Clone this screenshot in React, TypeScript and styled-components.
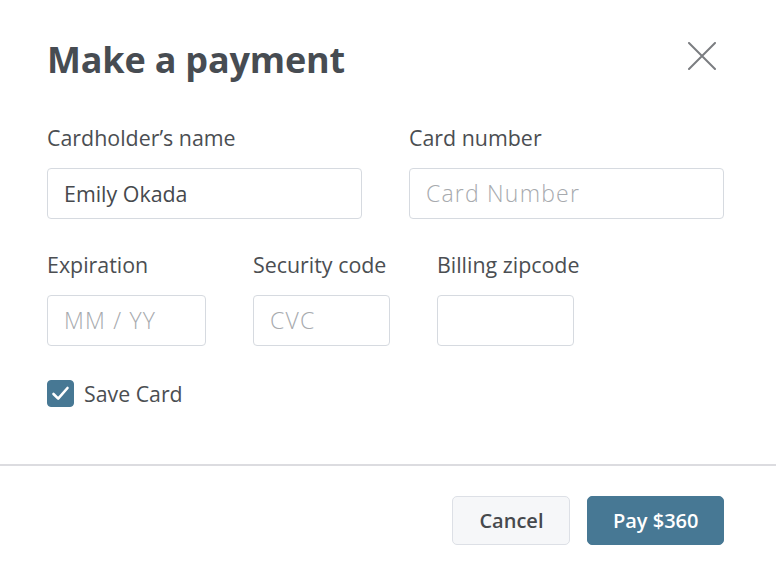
import React, { useState } from 'react';
import { createGlobalStyle, styled } from 'styled-components';

const GlobalStyle = createGlobalStyle`
  html, body {
    margin: 0;
    padding: 0;
    background: #ffffff;
  }
  body {
    font-family: 'Open Sans', 'Noto Sans', sans-serif;
    color: #4a4d52;
  }
`;

const CloseIcon = (): JSX.Element => (
  <svg width="30" height="28" viewBox="0 0 30 28" fill="none">
    <path d="M2 1 L28 27 M28 1 L2 27" stroke="#7b7d81" strokeWidth="2" strokeLinecap="round" />
  </svg>
);

const CheckIcon = (): JSX.Element => (
  <svg width="21" height="21" viewBox="0 0 21 21" fill="none">
    <path d="M3.5 11 L8.2 15.6 L17.5 5" stroke="#ffffff" strokeWidth="2.6" strokeLinecap="round" strokeLinejoin="round" />
  </svg>
);

type FieldProps = {
  label: string;
  placeholder?: string;
  defaultValue?: string;
  width: number;
};

const Field = ({ label, placeholder, defaultValue, width }: FieldProps): JSX.Element => (
  <FieldWrapper $width={width}>
    <Label>{label}</Label>
    <Input placeholder={placeholder} defaultValue={defaultValue} />
  </FieldWrapper>
);

export default function App(): JSX.Element {
  const [saveCard, setSaveCard] = useState(true);

  return (
    <>
      <GlobalStyle />
      <Modal>
        <Header>
          <Title>Make a payment</Title>
          <CloseButton aria-label="Close">
            <CloseIcon />
          </CloseButton>
        </Header>

        <Body>
          <Row>
            <Field label="Cardholder’s name" defaultValue="Emily Okada" width={316} />
            <Field label="Card number" placeholder="Card Number" width={316} />
          </Row>

          <Row>
            <Field label="Expiration" placeholder="MM / YY" width={159} />
            <Field label="Security code" placeholder="CVC" width={137} />
            <Field label="Billing zipcode" width={137} />
          </Row>

          <CheckRow onClick={() => setSaveCard(!saveCard)}>
            <CheckBox $checked={saveCard}>{saveCard && <CheckIcon />}</CheckBox>
            <CheckLabel>Save Card</CheckLabel>
          </CheckRow>
        </Body>

        <Footer>
          <Button $primary={false}>Cancel</Button>
          <Button $primary>Pay $360</Button>
        </Footer>
      </Modal>
    </>
  );
}

const Modal = styled.div`
  width: 776px;
  height: 578px;
  display: flex;
  flex-direction: column;
  background: #ffffff;
`;

const Header = styled.div`
  display: flex;
  align-items: flex-start;
  justify-content: space-between;
  padding: 36px 59px 0 47px;
`;

const Title = styled.h1`
  margin: 0;
  font-size: 36px;
  line-height: 48px;
  font-weight: 700;
  color: #474c52;
  letter-spacing: -0.2px;
`;

const CloseButton = styled.button`
  margin-top: 6px;
  padding: 0;
  border: none;
  background: transparent;
  cursor: pointer;
  display: grid;
  place-items: center;
`;

const Body = styled.div`
  flex: 1;
  display: flex;
  flex-direction: column;
  gap: 32px;
  padding: 40px 52px 0 47px;
`;

const Row = styled.div`
  display: flex;
  gap: 47px;
`;

const FieldWrapper = styled.div<{ $width: number }>`
  width: ${({ $width }) => $width}px;
  display: flex;
  flex-direction: column;
  gap: 16px;
`;

const Label = styled.label`
  font-size: 21.4px;
  line-height: 28px;
  white-space: nowrap;
  color: #4b4e52;
`;

const Input = styled.input`
  box-sizing: border-box;
  width: 100%;
  height: 51px;
  padding: 0 16px;
  border: 1px solid #d6dae0;
  border-radius: 4px;
  font-family: 'Open Sans', 'Noto Sans', sans-serif;
  font-size: 21.4px;
  color: #46494d;
  outline: none;

  &::placeholder {
    color: #a7aaae;
    font-size: 23px;
    font-weight: 300;
    letter-spacing: 1.2px;
  }
`;

const CheckRow = styled.div`
  display: flex;
  align-items: center;
  gap: 10px;
  height: 28px;
  margin-top: 1px;
  cursor: pointer;
`;

const CheckBox = styled.div<{ $checked: boolean }>`
  box-sizing: border-box;
  width: 27px;
  height: 27px;
  border-radius: 4px;
  background: ${({ $checked }) => ($checked ? '#477894' : '#ffffff')};
  border: 1px solid ${({ $checked }) => ($checked ? '#477894' : '#c9ced6')};
  display: grid;
  place-items: center;
`;

const CheckLabel = styled.span`
  font-size: 21.3px;
  color: #4b4e52;
`;

const Footer = styled.div`
  box-sizing: border-box;
  height: 114px;
  flex-shrink: 0;
  border-top: 2px solid #dcdce0;
  display: flex;
  align-items: flex-start;
  justify-content: flex-end;
  gap: 17px;
  padding: 30px 52px 0 0;
`;

const Button = styled.button<{ $primary: boolean }>`
  box-sizing: border-box;
  height: 49px;
  padding: 0 ${({ $primary }) => ($primary ? '24.5px' : '26px')};
  border-radius: 5px;
  font-family: 'Open Sans', 'Noto Sans', sans-serif;
  font-size: 20px;
  font-weight: 600;
  cursor: pointer;
  border: 1px solid ${({ $primary }) => ($primary ? '#477894' : '#dde0e6')};
  background: ${({ $primary }) => ($primary ? '#477894' : '#f6f7f9')};
  color: ${({ $primary }) => ($primary ? '#ffffff' : '#46494d')};
`;
